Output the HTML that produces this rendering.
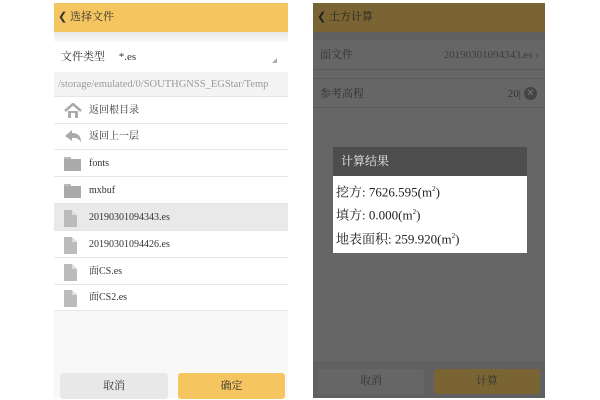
<!DOCTYPE html><html><head><meta charset="utf-8"><style>
*{margin:0;padding:0;box-sizing:border-box}
body{width:600px;height:400px;background:#fff;position:relative;overflow:hidden;font-family:"Liberation Serif","Noto Serif CJK SC",serif;color:#333}
.a{position:absolute}
.row{position:absolute;left:54px;width:234px;height:27px;border-bottom:1px solid #e6e6e6;font-size:10px;line-height:27px;padding-left:35px}
.ic{position:absolute;left:10px;top:6px}
</style></head><body>
<div class="a" style="left:54px;top:3px;width:234px;height:395px;background:#fff"></div>
<div class="a" style="left:54px;top:3px;width:234px;height:29px;background:#f5c660;font-size:11px;line-height:29px;padding-left:4px;color:#333">❮ 选择文件</div>
<div class="a" style="left:54px;top:32px;width:234px;height:10px;background:linear-gradient(#e8e8e8,#fafafa)"></div>
<div class="a" style="left:54px;top:42px;width:234px;height:30px;font-size:11px;line-height:30px;padding-left:7px">文件类型 &nbsp;&nbsp;&nbsp; <span style="font-size:11px">*.es</span></div>
<div class="a" style="left:272px;top:58px;width:0;height:0;border-left:5px solid transparent;border-bottom:5px solid #aaa"></div>
<div class="a" style="left:54px;top:72px;width:234px;height:25px;background:#f4f4f4;font-size:10.5px;line-height:25px;padding-left:4px;color:#999;border-bottom:1px solid #e4e4e4;white-space:nowrap">/storage/emulated/0/SOUTHGNSS_EGStar/Temp</div>
<div class="row" style="top:97px"><svg class="ic" width="18" height="15"><path d="M1 8L9 1L17 8" fill="none" stroke="#aaa" stroke-width="2.5"/><path d="M4 8V15H14V8" fill="#aaa"/><rect x="7" y="10" width="4" height="5" fill="#fff"/></svg>返回根目录</div>
<div class="row" style="top:123px"><svg class="ic" width="18" height="15"><path d="M1 7L8 1V4Q17 4 17 13Q14 8 8 9V12Z" fill="#aaa"/></svg>返回上一层</div>
<div class="row" style="top:150px"><svg class="ic" width="18" height="15"><rect x="0" y="1" width="7" height="3" fill="#bbb"/><rect x="0" y="3" width="17" height="12" fill="#aaa"/></svg>fonts</div>
<div class="row" style="top:177px"><svg class="ic" width="18" height="15"><rect x="0" y="1" width="7" height="3" fill="#bbb"/><rect x="0" y="3" width="17" height="12" fill="#aaa"/></svg>mxbuf</div>
<div class="row" style="top:204px;background:#e9e9e9"><svg class="ic" width="14" height="17"><path d="M0 0H8L13 5V17H0Z" fill="#bbb"/><path d="M8 0V5H13" fill="#ddd"/></svg>20190301094343.es</div>
<div class="row" style="top:231px"><svg class="ic" width="14" height="17"><path d="M0 0H8L13 5V17H0Z" fill="#bbb"/><path d="M8 0V5H13" fill="#ddd"/></svg>20190301094426.es</div>
<div class="row" style="top:258px"><svg class="ic" width="14" height="17"><path d="M0 0H8L13 5V17H0Z" fill="#bbb"/><path d="M8 0V5H13" fill="#ddd"/></svg>面CS.es</div>
<div class="row" style="top:284px"><svg class="ic" width="14" height="17"><path d="M0 0H8L13 5V17H0Z" fill="#bbb"/><path d="M8 0V5H13" fill="#ddd"/></svg>面CS2.es</div>
<div class="a" style="left:54px;top:311px;width:234px;height:87px;background:#f8f8f8"></div>
<div class="a" style="left:60px;top:373px;width:108px;height:26px;background:#e8e8e8;border-radius:3px;font-size:11px;line-height:26px;text-align:center">取消</div>
<div class="a" style="left:178px;top:373px;width:107px;height:26px;background:#f5c660;border-radius:3px;font-size:11px;line-height:26px;text-align:center">确定</div>
<div class="a" style="left:313px;top:3px;width:232px;height:395px;background:#666"></div>
<div class="a" style="left:313px;top:3px;width:232px;height:29px;background:#7a6433;font-size:11px;line-height:29px;padding-left:4px;color:#222">❮ 土方计算</div>
<div class="a" style="left:313px;top:32px;width:232px;height:8px;background:#5f5f5f"></div>
<div class="a" style="left:313px;top:40px;width:232px;height:30px;font-size:11px;line-height:30px;padding-left:7px;color:#333;border-bottom:1px solid #5a5a5a">面文件<span style="position:absolute;right:6px;color:#3e3e3e">20190301094343.es ›</span></div>
<div class="a" style="left:313px;top:78px;width:232px;height:30px;font-size:11px;line-height:30px;padding-left:7px;color:#333;border-top:1px solid #5a5a5a;border-bottom:1px solid #5a5a5a">参考高程<span style="position:absolute;right:24px;color:#333">20|</span><span style="position:absolute;right:8px;top:8px;width:13px;height:13px;border-radius:50%;background:#444;color:#777;font-size:10px;line-height:13px;text-align:center">✕</span></div>
<div class="a" style="left:333px;top:147px;width:194px;height:29px;background:#4d4d4d;color:#eee;font-size:12px;line-height:29px;padding-left:8px">计算结果</div>
<div class="a" style="left:333px;top:176px;width:194px;height:77px;background:#fff;color:#222;font-size:13px;line-height:20px;padding:3px 3px">挖方: 7626.595(m<sup style="font-size:7px">2</sup>)<br>填方: 0.000(m<sup style="font-size:7px">2</sup>)<br>地表面积: 259.920(m<sup style="font-size:7px">2</sup>)</div>
<div class="a" style="left:313px;top:361px;width:232px;height:37px;background:#606060"></div>
<div class="a" style="left:318px;top:369px;width:106px;height:25px;background:#666;border-radius:3px;font-size:11px;line-height:25px;text-align:center;color:#333">取消</div>
<div class="a" style="left:434px;top:369px;width:106px;height:25px;background:#7a6433;border-radius:3px;font-size:11px;line-height:25px;text-align:center;color:#333">计算</div>
</body></html>
